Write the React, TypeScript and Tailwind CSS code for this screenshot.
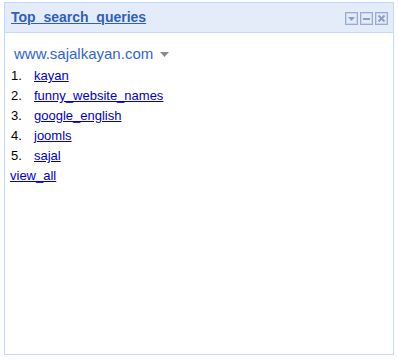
import React from "react";

const items = ["kayan", "funny_website_names", "google_english", "joomls", "sajal"];

function IconBox({ kind }: { kind: "menu" | "min" | "close" }) {
  return (
    <svg width="13" height="13" viewBox="0 0 13 13" className="block">
      <rect x="0.5" y="0.5" width="12" height="12" fill="#e4ebf8" stroke="#9aabd1" />
      <rect x="1.5" y="1.5" width="10" height="10" fill="none" stroke="#c9d5ee" />
      {kind === "menu" && <polygon points="3,5 10,5 6.5,9" fill="#8c9ec6" />}
      {kind === "min" && <rect x="3" y="6" width="7" height="2" fill="#8c9ec6" />}
      {kind === "close" && (
        <path d="M3.5 3.5 L9.5 9.5 M9.5 3.5 L3.5 9.5" stroke="#8c9ec6" strokeWidth="2" />
      )}
    </svg>
  );
}

export default function App() {
  return (
    <div className="w-[398px] h-[359px] bg-white pt-[2px] pl-[4px]" style={{ fontFamily: '"Liberation Sans", Arial, sans-serif' }}>
      <div className="w-[390px] h-[353px] border border-[#c3d9ff] flex flex-col">
        <div className="h-[30px] bg-[#e5ecf9] border-b border-[#c3d9ff] flex items-center justify-between pl-[6px] pr-[5px]">
          <a href="#" className="text-[14px] font-bold text-[#2f5fbf] underline leading-[17px] mt-[-1px]">
            Top_search_queries
          </a>
          <div className="flex gap-[2px] mt-[2px]">
            <IconBox kind="menu" />
            <IconBox kind="min" />
            <IconBox kind="close" />
          </div>
        </div>
        <div className="pt-[12px]">
          <div className="flex items-center pl-[9px] h-[17px] mb-[4px]">
            <span className="text-[15px] leading-[17px] text-[#3366cc]">www.sajalkayan.com</span>
            <svg width="9" height="5" viewBox="0 0 9 5" className="ml-[7px] mt-[2px]">
              <polygon points="0,0 9,0 4.5,5" fill="#8a8a8a" />
            </svg>
          </div>
          {items.map((t, i) => (
            <div key={t} className="flex text-[13px] leading-[20px] h-[20px]">
              <span className="w-[29px] pl-[6px] text-black">{i + 1}.</span>
              <a href="#" className="text-[#0000cc] underline">{t}</a>
            </div>
          ))}
          <div className="text-[13px] leading-[20px] pl-[5px]">
            <a href="#" className="text-[#0000cc] underline">view_all</a>
          </div>
        </div>
      </div>
    </div>
  );
}
